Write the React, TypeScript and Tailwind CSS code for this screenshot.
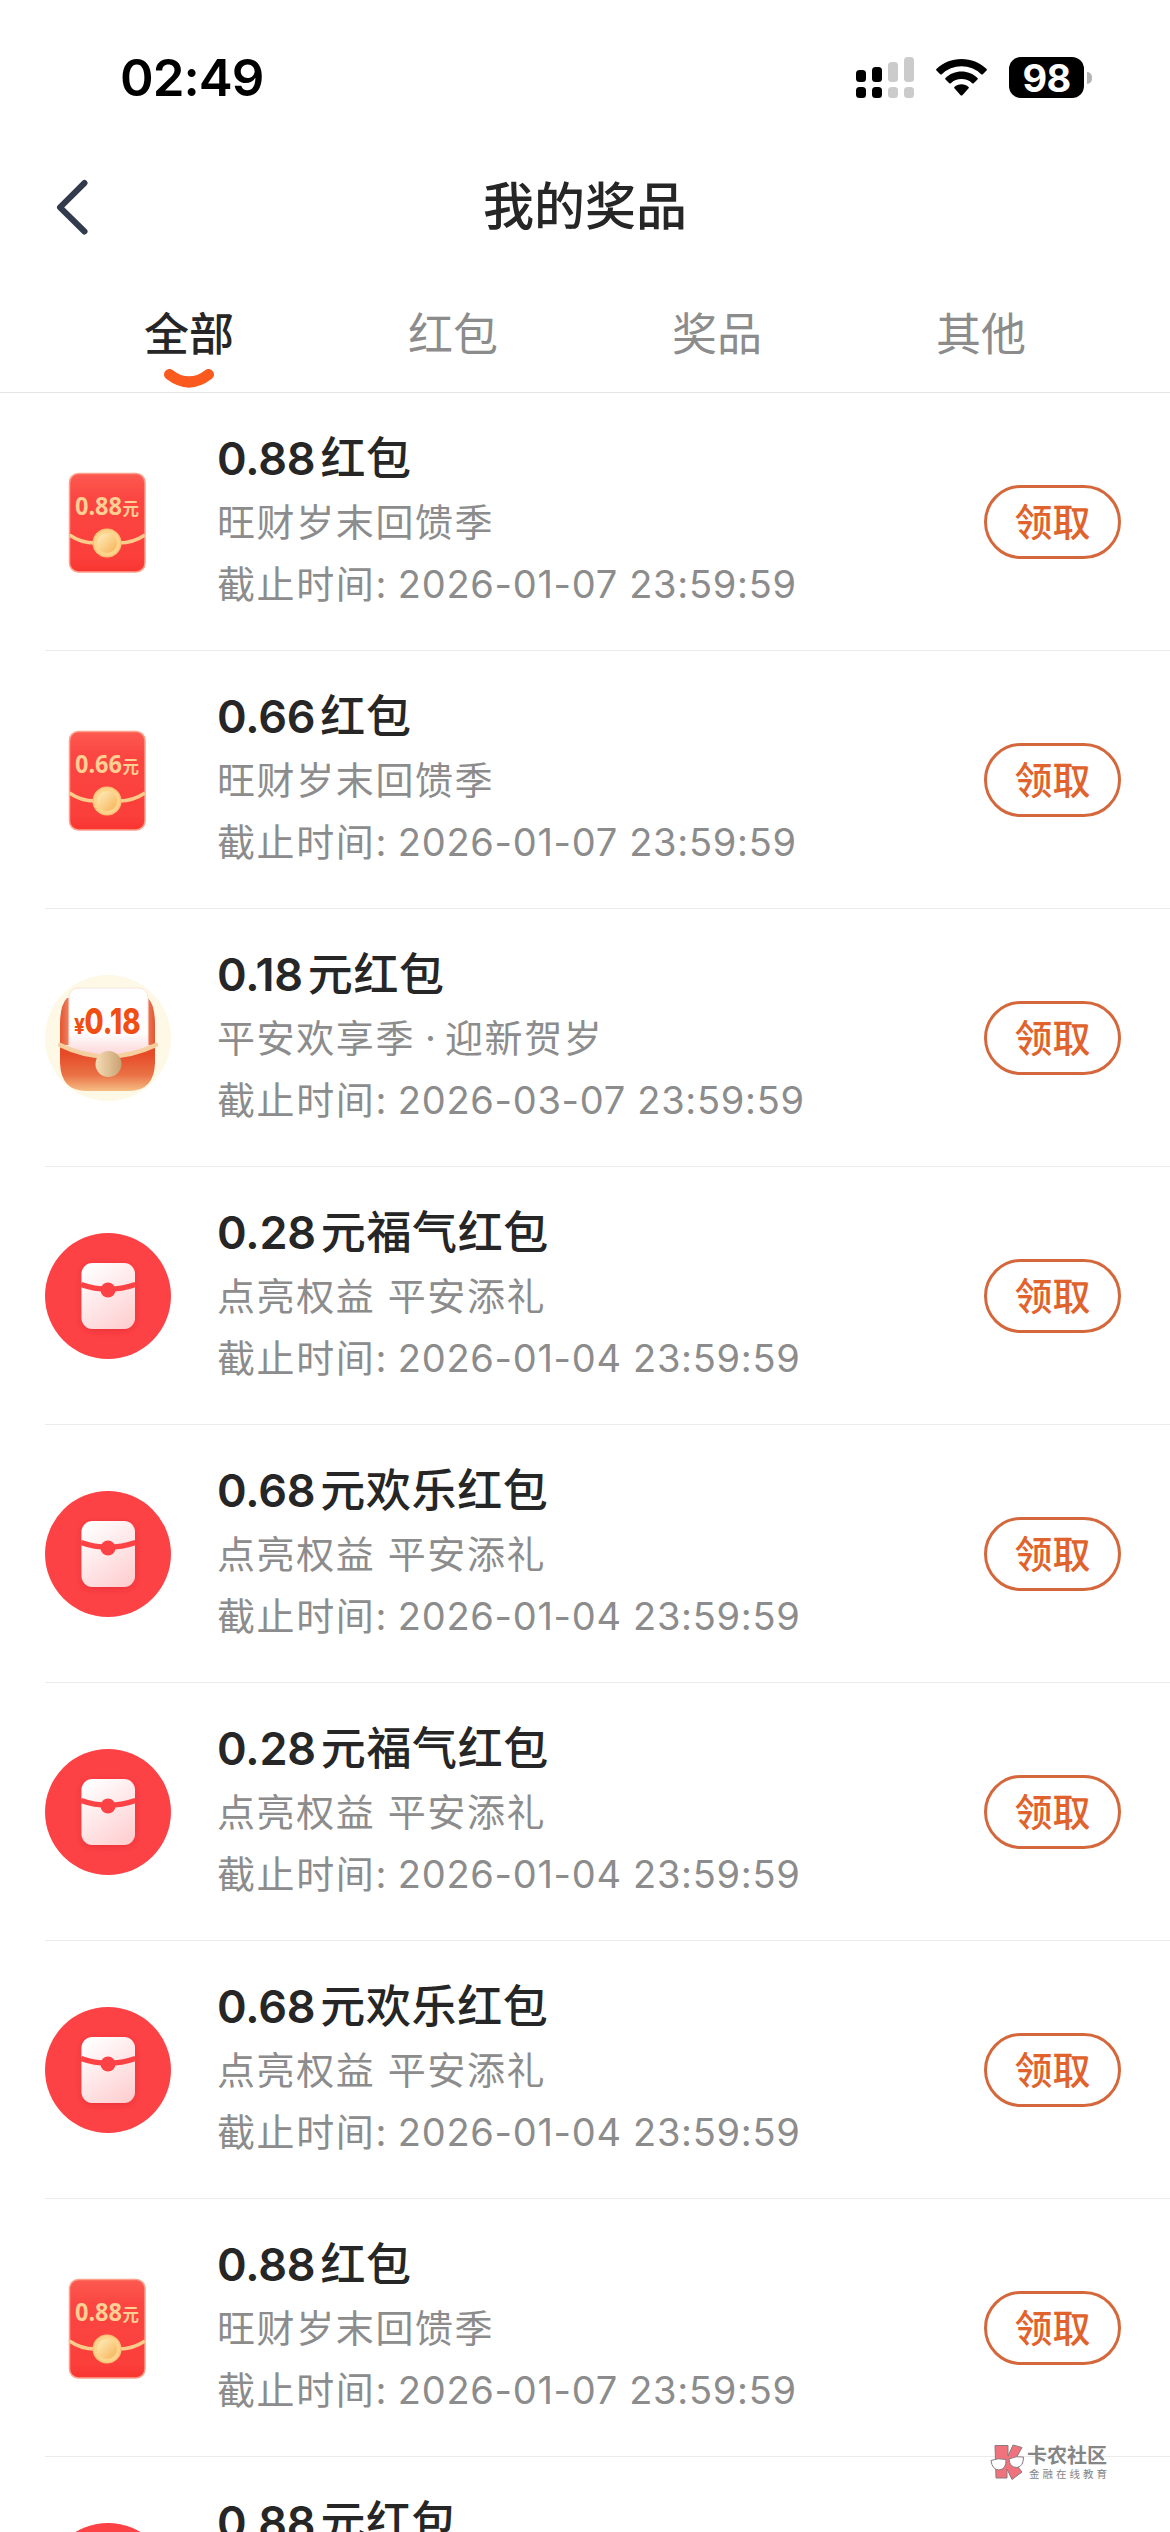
import { FC } from 'react';

type IconKind = 'packet' | 'card' | 'circle';

interface Prize {
  kind: IconKind;
  amount: string;
  name: string;
  desc: string;
  expire: string;
}

const tabs = ['全部', '红包', '奖品', '其他'];

const prizes: Prize[] = [
  { kind: 'packet', amount: '0.88', name: '红包', desc: '旺财岁末回馈季', expire: '2026-01-07 23:59:59' },
  { kind: 'packet', amount: '0.66', name: '红包', desc: '旺财岁末回馈季', expire: '2026-01-07 23:59:59' },
  { kind: 'card', amount: '0.18', name: '元红包', desc: '平安欢享季 · 迎新贺岁', expire: '2026-03-07 23:59:59' },
  { kind: 'circle', amount: '0.28', name: '元福气红包', desc: '点亮权益 平安添礼', expire: '2026-01-04 23:59:59' },
  { kind: 'circle', amount: '0.68', name: '元欢乐红包', desc: '点亮权益 平安添礼', expire: '2026-01-04 23:59:59' },
  { kind: 'circle', amount: '0.28', name: '元福气红包', desc: '点亮权益 平安添礼', expire: '2026-01-04 23:59:59' },
  { kind: 'circle', amount: '0.68', name: '元欢乐红包', desc: '点亮权益 平安添礼', expire: '2026-01-04 23:59:59' },
  { kind: 'packet', amount: '0.88', name: '红包', desc: '旺财岁末回馈季', expire: '2026-01-07 23:59:59' },
  { kind: 'circle', amount: '0.88', name: '元红包', desc: '', expire: '' },
];

const StatusBar: FC = () => {
  return (
    <div className="flex h-[156px] shrink-0 items-start justify-between pl-[120px] pr-[78px] pt-[57px]">
      <span className="text-[51px] font-semibold leading-[42px] tracking-[-1px] text-black">02:49</span>
      <div className="flex items-start">
        <svg width="58" height="41" viewBox="0 0 58 41">
          <g fill="#000">
            <rect x="0" y="13" width="10" height="12" rx="3.5" />
            <rect x="16" y="10" width="10" height="15" rx="3.5" />
            <rect x="0" y="30" width="10" height="11" rx="3.5" />
            <rect x="16" y="30" width="10" height="11" rx="3.5" />
          </g>
          <g fill="#cbcbcb">
            <rect x="32" y="5" width="10" height="20" rx="3.5" />
            <rect x="48" y="0" width="10" height="25" rx="3.5" />
            <rect x="32" y="30" width="10" height="11" rx="3.5" />
            <rect x="48" y="30" width="10" height="11" rx="3.5" />
          </g>
        </svg>
        <svg className="ml-[22px] mt-[2px]" width="51" height="37" viewBox="0 0 51 37">
          <path d="M25.5 0C35 0 44 3.6 50.6 10Q51.2 10.7 50.5 11.4L46.8 15.2Q46 15.8 45.2 15.2A28.5 28.5 0 0 0 5.8 15.2Q5 15.8 4.2 15.2L.5 11.4Q-.2 10.7.4 10C7 3.6 16 0 25.5 0Z" />
          <path d="M25.5 12.6C31.5 12.6 37.2 14.9 41.5 19Q42.2 19.7 41.5 20.4L37.7 24.2Q37 24.8 36.2 24.2A15.8 15.8 0 0 0 14.8 24.2Q14 24.8 13.3 24.2L9.5 20.4Q8.8 19.7 9.5 19C13.8 14.9 19.5 12.6 25.5 12.6Z" />
          <path d="M25.5 25.2C28.2 25.2 30.7 26.2 32.6 27.9Q33.3 28.6 32.6 29.3L26.4 36.2Q25.5 37 24.6 36.2L18.4 29.3Q17.7 28.6 18.4 27.9C20.3 26.2 22.8 25.2 25.5 25.2Z" />
        </svg>
        <div className="ml-[22px] flex h-[41px] w-[75px] items-center justify-center rounded-[12px] bg-black text-[38px] font-bold leading-none tracking-[-0.8px] text-white">
          98
        </div>
        <div className="ml-[3px] mt-[15px] h-[12px] w-[5px] rounded-r-full bg-[#b5b5b5]" />
      </div>
    </div>
  );
};

const Header: FC = () => {
  return (
    <header className="flex h-[102px] shrink-0 items-center">
      <div className="flex-1">
        <svg className="ml-[56px]" width="33" height="56" viewBox="0 0 33 56" fill="none" stroke="#323a4e" strokeWidth="6" strokeLinecap="round" strokeLinejoin="round">
          <path d="M28.5 4L4 28.3L28.5 52.5" />
        </svg>
      </div>
      <h1 className="text-[51px] font-medium leading-[60px] text-[#262626]">我的奖品</h1>
      <div className="flex-1" />
    </header>
  );
};

const Tabs: FC = () => {
  return (
    <nav className="flex h-[135px] shrink-0 border-b border-[#e6e6e6] px-[57px]">
      {tabs.map((tab, i) => (
        <div key={tab} className="flex flex-1 flex-col items-center pt-[51px]">
          <span className={i === 0 ? 'text-[45px] font-medium leading-[52px] text-[#262626]' : 'text-[45px] leading-[52px] text-[#8c8c8c]'}>
            {tab}
          </span>
          {i === 0 && (
            <svg className="mt-[6px]" width="52" height="24" viewBox="0 0 52 24" fill="none" stroke="#fa5a1e" strokeWidth="11" strokeLinecap="round">
              <path d="M6.5 7.5Q26 22.5 45.5 7.5" />
            </svg>
          )}
        </div>
      ))}
    </nav>
  );
};

const PacketIcon: FC<{ amount: string }> = ({ amount }) => {
  return (
    <svg width="126" height="126" viewBox="0 0 126 126">
      <defs>
        <linearGradient id="packetBody" x1="0" y1="0" x2="0" y2="1">
          <stop offset="0" stopColor="#fc5a50" />
          <stop offset="0.25" stopColor="#fb4642" />
          <stop offset="0.85" stopColor="#fb3f3b" />
          <stop offset="1" stopColor="#f83530" />
        </linearGradient>
        <linearGradient id="packetCoin" x1="0" y1="0" x2="1" y2="1">
          <stop offset="0" stopColor="#fff0bf" />
          <stop offset="1" stopColor="#f6b155" />
        </linearGradient>
      </defs>
      <rect x="24.5" y="14.5" width="75.5" height="98.5" rx="9" fill="url(#packetBody)" stroke="#fda08c" strokeWidth="1.5" />
      <text x="30" y="56" fontSize="25" fontWeight="700" fill="#ffcf94" textLength="47" lengthAdjust="spacingAndGlyphs" className="font-['Noto_Sans']">
        {amount}
      </text>
      <text x="77.5" y="55.5" fontSize="16.5" fontWeight="700" fill="#ffcf94" className="font-['Noto_Sans_CJK_SC']">
        元
      </text>
      <path d="M24.5 76Q36 84 50 84M74 84Q88 84 100 76" fill="none" stroke="#fbcb8a" strokeWidth="3.5" />
      <circle cx="62" cy="84" r="14.5" fill="#f9c377" />
      <circle cx="62" cy="84" r="13" fill="#fcd48c" />
      <circle cx="62" cy="84" r="10" fill="url(#packetCoin)" />
    </svg>
  );
};

const CardIcon: FC = () => {
  return (
    <svg width="126" height="126" viewBox="0 0 126 126">
      <defs>
        <linearGradient id="cardBack" x1="0" y1="0" x2="1" y2="0">
          <stop offset="0" stopColor="#e5552f" />
          <stop offset="0.15" stopColor="#f29a80" />
          <stop offset="0.85" stopColor="#f29a80" />
          <stop offset="1" stopColor="#e5552f" />
        </linearGradient>
        <linearGradient id="cardPaper" x1="0" y1="0" x2="0" y2="1">
          <stop offset="0.6" stopColor="#fff" />
          <stop offset="1" stopColor="#fbc9cd" />
        </linearGradient>
        <linearGradient id="cardFront" x1="0" y1="0" x2="0" y2="1">
          <stop offset="0.2" stopColor="#e64b28" />
          <stop offset="0.65" stopColor="#ea7145" />
          <stop offset="1" stopColor="#f6bd84" />
        </linearGradient>
        <linearGradient id="cardCoin" x1="0" y1="0" x2="1" y2="0">
          <stop offset="0" stopColor="#f6dcb4" />
          <stop offset="1" stopColor="#c9a273" />
        </linearGradient>
      </defs>
      <circle cx="63" cy="63" r="63" fill="#fef8e6" />
      <path d="M22 23Q15 30 15 50V70H110V50Q110 30 103 23Z" fill="url(#cardBack)" />
      <rect x="24" y="13" width="79" height="74" rx="9" fill="url(#cardPaper)" stroke="#fbe3dc" />
      <path d="M15 70Q62 96 110 70V88Q109 116 84 116H41Q16 116 15 88Z" fill="url(#cardFront)" />
      <path d="M15 70Q62 93 111 70" fill="none" stroke="#f6cfa0" strokeWidth="4.5" strokeLinecap="round" />
      <circle cx="63.5" cy="89" r="13" fill="url(#cardCoin)" />
      <text x="29" y="59" fontSize="21" fontWeight="800" fill="#f04e13" textLength="11" lengthAdjust="spacingAndGlyphs">
        ¥
      </text>
      <text x="39.5" y="59" fontSize="35" fontWeight="800" fill="#f04e13" textLength="56" lengthAdjust="spacingAndGlyphs">
        0.18
      </text>
    </svg>
  );
};

const CircleIcon: FC = () => {
  return (
    <svg width="126" height="126" viewBox="0 0 126 126">
      <defs>
        <linearGradient id="circlePaper" x1="0.2" y1="0" x2="0.8" y2="1">
          <stop offset="0" stopColor="#fff" />
          <stop offset="1" stopColor="#fecfd1" />
        </linearGradient>
        <filter id="circleShadow" x="-30%" y="-30%" width="160%" height="160%">
          <feDropShadow dx="0" dy="2" stdDeviation="3" floodColor="#d62128" floodOpacity="0.5" />
        </filter>
      </defs>
      <circle cx="63" cy="63" r="63" fill="#fd4246" />
      <rect x="36.5" y="30" width="53.5" height="66" rx="11" fill="url(#circlePaper)" filter="url(#circleShadow)" />
      <path d="M36 51.5Q63 61 90.5 51.5" fill="none" stroke="#fd4246" strokeWidth="5.5" />
      <circle cx="63" cy="57" r="7.5" fill="#fd4246" />
    </svg>
  );
};

const PrizeRow: FC<{ prize: Prize }> = ({ prize }) => {
  const [first, second] = prize.desc.split(' · ');

  return (
    <li className="ml-[45px] flex h-[258px] shrink-0 items-center border-b border-[#ebebeb] pr-[49px]">
      {prize.kind === 'packet' && <PacketIcon amount={prize.amount} />}
      {prize.kind === 'card' && <CardIcon />}
      {prize.kind === 'circle' && <CircleIcon />}
      <div className="ml-[46px] h-[190px] flex-1 whitespace-nowrap">
        <h2 className="flex gap-[5px] text-[45px] font-medium leading-[64px] tracking-[0.6px] text-[#262626]">
          <span className="font-semibold tracking-[-0.2px]">{prize.amount}</span>
          <span>{prize.name}</span>
        </h2>
        <p className="text-[38px] leading-[63px] tracking-[1.6px] text-[#8c8c8c]">
          {first}
          {second && <span className="tracking-[-0.8px]"> · </span>}
          {second}
        </p>
        {prize.expire && (
          <p className="text-[38px] leading-[60px] tracking-[1.6px] text-[#8c8c8c]">
            截止时间:<span className="tracking-[-0.8px]"> </span>
            <span className="tracking-[0.7px]">{prize.expire}</span>
          </p>
        )}
      </div>
      {prize.expire && (
        <button className="h-[74px] w-[137px] rounded-full border-[3px] border-[#d4683c] text-[38px] font-medium leading-none text-[#e0622d]">
          领取
        </button>
      )}
    </li>
  );
};

const Watermark: FC = () => {
  return (
    <div className="absolute left-[990px] top-[2444px] flex items-start text-[#858585]">
      <svg width="35" height="37" viewBox="0 0 35 37" stroke="#8a7b7d" strokeLinejoin="round">
        <path d="M5 1.5L18 1.5V12L23 1L32 3.5L24 18L32 28L22 35.5L17 25V34H6Z" fill="#f0727c" />
        <path d="M1 16.5Q8 13.5 16 15.5Q16.5 25 9 26Q2 25.5 1 16.5Z" fill="#fff" />
        <path d="M19 15Q26 11.5 33.5 13Q33.5 22.5 27 23.5Q19.5 23.5 19 15Z" fill="#fff" />
      </svg>
      <div className="ml-[2px] whitespace-nowrap">
        <p className="text-[20px] font-bold leading-[24px]">卡农社区</p>
        <p className="ml-[2px] text-[10.5px] leading-[13px] tracking-[3px]">金融在线教育</p>
      </div>
    </div>
  );
};

const App: FC = () => {
  return (
    <main className="relative flex h-[2532px] w-[1170px] flex-col overflow-hidden bg-white font-['Inter','Noto_Sans_CJK_SC',sans-serif]">
      <StatusBar />
      <Header />
      <Tabs />
      <ul className="flex flex-col">
        {prizes.map((prize, i) => (
          <PrizeRow key={i} prize={prize} />
        ))}
      </ul>
      <Watermark />
    </main>
  );
};

export default App;
